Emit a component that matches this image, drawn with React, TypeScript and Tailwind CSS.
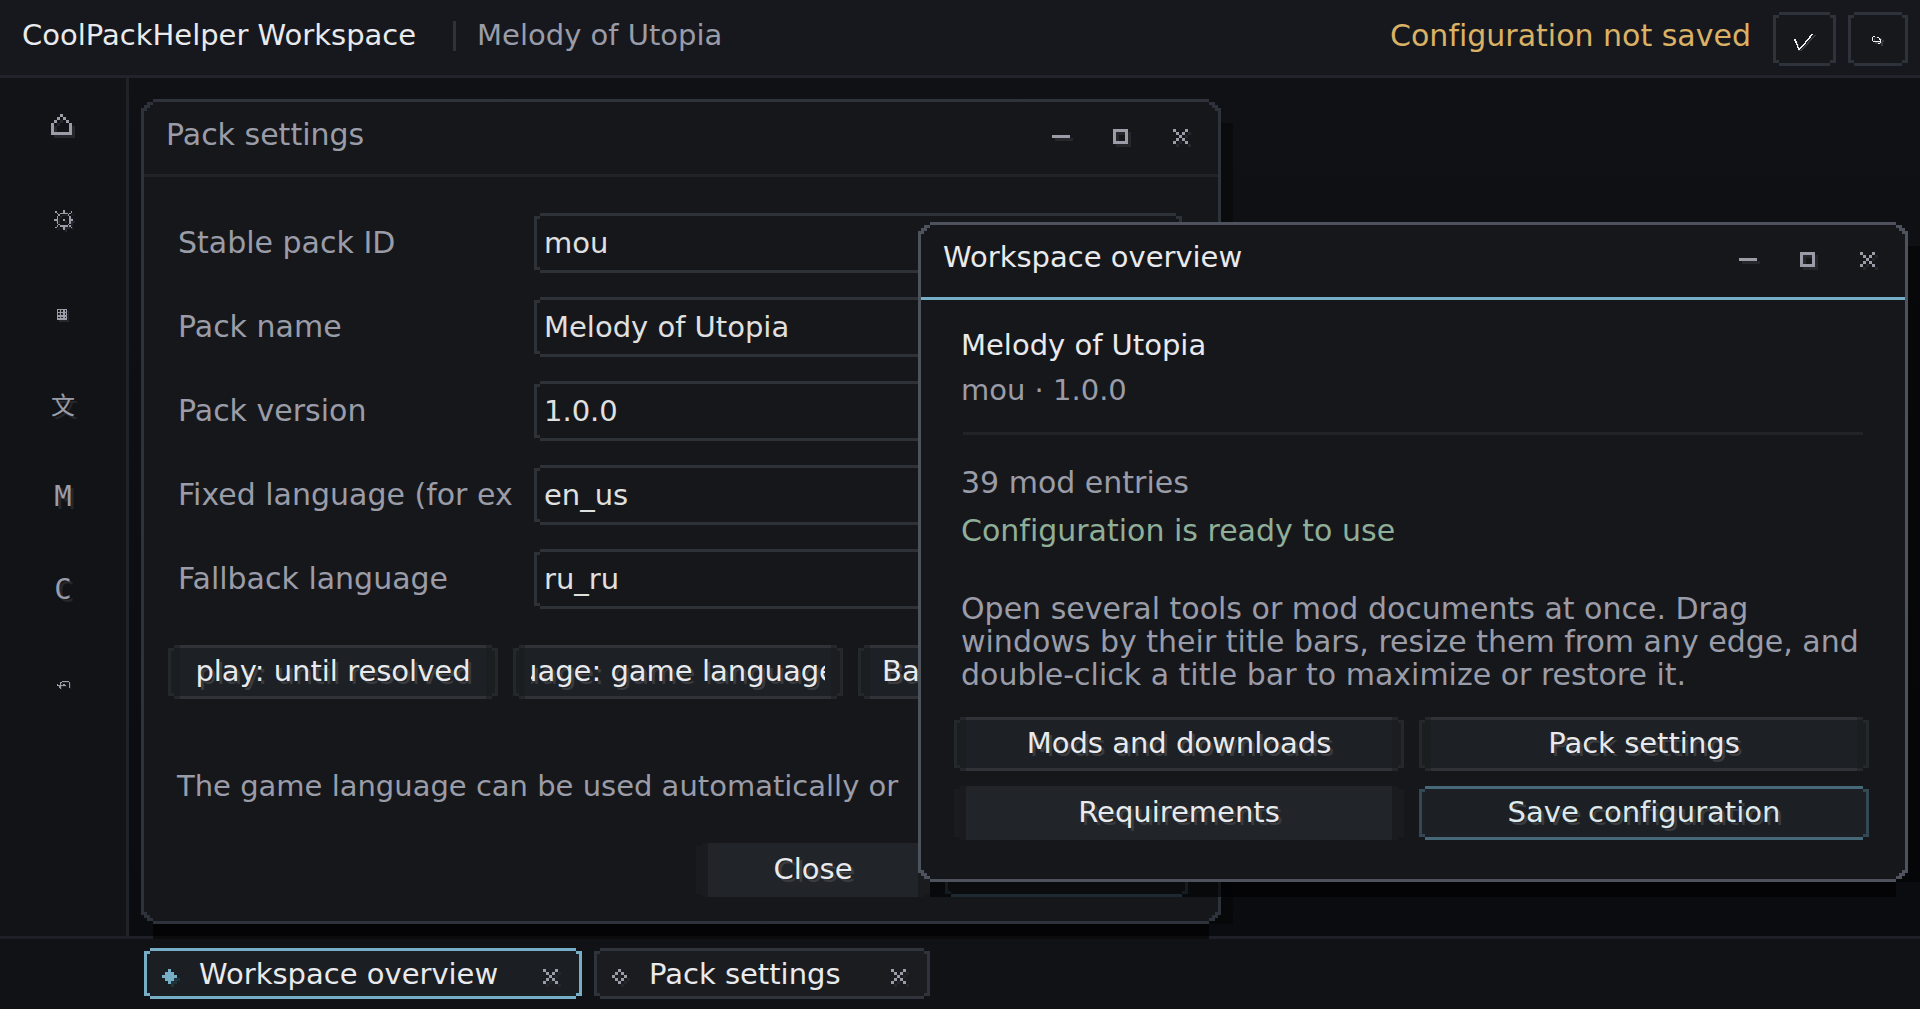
import React from 'react';
import clsx from 'clsx';

const NOTCH_OUTER =
  '[clip-path:polygon(0_3px,6px_3px,6px_0,calc(100%-6px)_0,calc(100%-6px)_3px,100%_3px,100%_calc(100%-3px),calc(100%-6px)_calc(100%-3px),calc(100%-6px)_100%,6px_100%,6px_calc(100%-3px),0_calc(100%-3px))]';
const NOTCH_INNER =
  'before:absolute before:inset-[3px] before:-z-10 before:[clip-path:polygon(0_3px,3px_3px,3px_0,calc(100%-3px)_0,calc(100%-3px)_3px,100%_3px,100%_calc(100%-3px),calc(100%-3px)_calc(100%-3px),calc(100%-3px)_100%,3px_100%,3px_calc(100%-3px),0_calc(100%-3px))]';
const NOTCH = `relative isolate ${NOTCH_OUTER} ${NOTCH_INNER}`;

const STEP_OUTER =
  '[clip-path:polygon(0_9px,3px_9px,3px_6px,6px_6px,6px_3px,12px_3px,12px_0,calc(100%-12px)_0,calc(100%-12px)_3px,calc(100%-6px)_3px,calc(100%-6px)_6px,calc(100%-3px)_6px,calc(100%-3px)_9px,100%_9px,100%_calc(100%-9px),calc(100%-3px)_calc(100%-9px),calc(100%-3px)_calc(100%-6px),calc(100%-6px)_calc(100%-6px),calc(100%-6px)_calc(100%-3px),calc(100%-12px)_calc(100%-3px),calc(100%-12px)_100%,12px_100%,12px_calc(100%-3px),6px_calc(100%-3px),6px_calc(100%-6px),3px_calc(100%-6px),3px_calc(100%-9px),0_calc(100%-9px))]';
const STEP_INNER =
  'before:absolute before:inset-[3px] before:-z-10 before:bg-[#16171b] before:[clip-path:polygon(0_9px,3px_9px,3px_6px,6px_6px,6px_3px,9px_3px,9px_0,calc(100%-9px)_0,calc(100%-9px)_3px,calc(100%-6px)_3px,calc(100%-6px)_6px,calc(100%-3px)_6px,calc(100%-3px)_9px,100%_9px,100%_calc(100%-9px),calc(100%-3px)_calc(100%-9px),calc(100%-3px)_calc(100%-6px),calc(100%-6px)_calc(100%-6px),calc(100%-6px)_calc(100%-3px),calc(100%-9px)_calc(100%-3px),calc(100%-9px)_100%,9px_100%,9px_calc(100%-3px),6px_calc(100%-3px),6px_calc(100%-6px),3px_calc(100%-6px),3px_calc(100%-9px),0_calc(100%-9px))]';

type PixelIconProps = { rows: string[]; className?: string; shadow?: string };

// 3px bitmap glyph with a drop shadow one cell down and right
const PixelIcon: React.FC<PixelIconProps> = ({ rows, className, shadow = '#26272b' }) => {
  const cells = rows.flatMap((row, y) =>
    [...row].map((c, x) => (c === '#' ? `M${x * 3} ${y * 3}h3v3h-3z` : ''))
  ).join('');
  const w = rows[0].length * 3 + 3;
  const h = rows.length * 3 + 3;
  return (
    <svg width={w} height={h} viewBox={`0 0 ${w} ${h}`} className={className} shapeRendering="crispEdges" aria-hidden="true">
      <path d={cells} fill={shadow} transform="translate(3 3)" />
      <path d={cells} fill="currentColor" />
    </svg>
  );
};

const MINUS = ['......', '......', '######', '......', '......'];
const SQUARE = ['#####', '#...#', '#...#', '#...#', '#####'];
const CROSS = ['#...#', '.#.#.', '..#..', '.#.#.', '#...#'];
const DIAMOND = ['..#..', '.###.', '#####', '.###.', '..#..'];
const DIAMOND_OPEN = ['..#..', '.#.#.', '#...#', '.#.#.', '..#..'];

const HOME = 'M9 5h3v3h-3zM6 8h3v3h-3zM12 8h3v3h-3zM3 11h3v3h-3zM15 11h3v3h-3zM0 14h3v9h-3zM18 14h3v9h-3zM0 23h21v3h-21z';
const GEAR =
  'M12 8h2v3h-2zM12 25h2v3h-2zM3 17h3v2h-3zM20 17h2v2h-2zM9 11h8v1h-8zM9 23h8v2h-8zM6 14h1v8h-1zM18 14h2v8h-2zM7 12h2v2h-2zM17 12h1v2h-1zM7 22h2v1h-2zM17 22h1v1h-1zM4 9h2v2h-2zM6 11h1v1h-1zM20 9h1v2h-1zM18 11h2v1h-2zM4 25h2v1h-2zM6 23h1v2h-1zM20 25h1v1h-1zM18 23h2v2h-2zM12 17h2v2h-2z';
const GRID =
  'M6 14h10v1h-10zM6 17h10v1h-10zM6 20h10v2h-10zM6 23h10v2h-10zM6 14h1v11h-1zM9 14h1v11h-1zM12 14h2v11h-2zM15 14h1v11h-1z';
const UNDO = 'M11 14h7v1h-7zM18 15h1v6h-1zM7 18h7v1h-7zM6 17h1v2h-1zM9 15h1v7h-1zM8 19h2v2h-2zM12 17h2v2h-2zM14 18h1v1h-1zM10 15h1v1h-1z';

const RailIcon: React.FC<{ d: string; offset: number }> = ({ d, offset }) => (
  <svg width="24" height="31" viewBox="0 0 24 31" shapeRendering="crispEdges" aria-hidden="true">
    <path d={d} fill="#26272b" transform={`translate(${offset} ${offset})`} />
    <path d={d} fill="currentColor" />
  </svg>
);

const railItems = [
  { label: 'Home', icon: <RailIcon d={HOME} offset={3} /> },
  { label: 'Settings', icon: <RailIcon d={GEAR} offset={2} /> },
  { label: 'Mods', icon: <RailIcon d={GRID} offset={2} /> },
  { label: 'Languages', icon: <span className="font-['Noto_Sans_CJK_SC',sans-serif] text-2xl">文</span> },
  { label: 'Modrinth', icon: <span>M</span> },
  { label: 'CurseForge', icon: <span>C</span> },
  { label: 'Undo', icon: <RailIcon d={UNDO} offset={1} /> },
];

const fields = [
  { id: 'pack-id', label: 'Stable pack ID', value: 'mou' },
  { id: 'pack-name', label: 'Pack name', value: 'Melody of Utopia' },
  { id: 'pack-version', label: 'Pack version', value: '1.0.0' },
  { id: 'fixed-language', label: 'Fixed language (for ex', value: 'en_us' },
  { id: 'fallback-language', label: 'Fallback language', value: 'ru_ru' },
];

const buttonTones = {
  normal:
    'bg-[linear-gradient(90deg,#24272b_12px,#303238_12px,#303238_calc(100%-12px),#24272b_calc(100%-12px))] before:bg-[linear-gradient(90deg,#1b1e21_9px,#1d2024_9px,#1d2024_calc(100%-9px),#1b1e21_calc(100%-9px))] text-[#e9eaed]',
  solid:
    'bg-[linear-gradient(90deg,#1a1b1f_12px,#212428_12px,#212428_calc(100%-12px),#1a1b1f_calc(100%-12px))] before:bg-[linear-gradient(90deg,#1a1b1f_9px,#212428_9px,#212428_calc(100%-9px),#1a1b1f_calc(100%-9px))] text-[#e9eaed]',
  accent:
    'bg-[linear-gradient(90deg,#324854_6px,#466878_6px,#466878_calc(100%-6px),#324854_calc(100%-6px))] before:bg-[#1c1f23] text-[#dde9ec]',
};

type PackButtonProps = {
  tone?: keyof typeof buttonTones;
  className?: string;
  label?: string;
  children?: React.ReactNode;
};

const PackButton: React.FC<PackButtonProps> = ({ tone = 'normal', className, label, children }) => (
  <button
    type="button"
    aria-label={label}
    className={clsx(NOTCH, buttonTones[tone], 'h-[54px] px-[18px] text-[29px] [text-shadow:3px_3px_0_#393b3e]', className)}
  >
    <span className="flex justify-center overflow-hidden whitespace-nowrap">{children}</span>
  </button>
);

type WindowProps = {
  title: string;
  active?: boolean;
  className: string;
  children: React.ReactNode;
};

const Window: React.FC<WindowProps> = ({ title, active = false, className, children }) => (
  <section aria-label={title} className={clsx('absolute', className)}>
    <div className="absolute inset-x-3 -bottom-[15px] h-8 bg-black/60" />
    <div className={clsx('absolute -right-3 top-6 bottom-0 w-6', active ? 'bg-black/50' : 'bg-black/30')} />
    <div className={clsx('relative isolate p-[3px]', STEP_OUTER, STEP_INNER, active ? 'bg-[#4d525d]' : 'bg-[#2e323a]')}>
      <header
        className={clsx(
          'flex h-[75px] justify-between border-b-[3px] pl-[22px] pr-[6px]',
          active ? 'border-[#76aec8]' : 'border-[#222327]'
        )}
      >
        <h2 className={clsx('leading-[65px]', active ? 'text-[29px] text-[#e9eaed]' : 'text-[30px] text-[#9a9ca8]')}>{title}</h2>
        <div className="flex text-[#9a9ca8]">
          <button type="button" aria-label="Minimize" className="flex w-[60px] items-center justify-center">
            <PixelIcon rows={MINUS} />
          </button>
          <button type="button" aria-label="Maximize" className="flex w-[60px] items-center justify-center">
            <PixelIcon rows={SQUARE} />
          </button>
          <button type="button" aria-label="Close" className="flex w-[60px] items-center justify-center">
            <PixelIcon rows={CROSS} />
          </button>
        </div>
      </header>
      {children}
    </div>
  </section>
);

const PackSettings: React.FC = () => (
  <Window title="Pack settings" className="left-3 top-[21px] w-[1080px]">
    <form className="pl-6 pr-[30px] pt-9 pb-6">
      <div className="flex flex-col gap-6 pl-[10px] pr-[6px]">
        {fields.map((field) => (
          <div key={field.id} className="flex h-[60px]">
            <label
              htmlFor={field.id}
              className="w-[356px] shrink-0 overflow-hidden whitespace-nowrap text-[30px] leading-[59px] text-[#9a9ca8]"
            >
              {field.label}
            </label>
            <div className={clsx(NOTCH, 'flex-1 bg-[#2d3138] before:bg-[#16171b]')}>
              <input
                id={field.id}
                type="text"
                defaultValue={field.value}
                className="h-full w-full bg-transparent pl-[10px] pb-px text-[29px] text-[#e0e0e0] outline-none"
              />
            </div>
          </div>
        ))}
      </div>

      <div className="mt-9 grid grid-cols-3 gap-[15px]">
        <PackButton>play: until resolved</PackButton>
        <PackButton>uage: game language</PackButton>
        <PackButton>
          <span className="w-full pl-[6px] text-left">Ba</span>
        </PackButton>
      </div>

      <p className="mt-[69px] whitespace-nowrap pl-[9px] text-[29px] leading-9 text-[#9a9ca8]">
        The game language can be used automatically or
      </p>

      <div className="mt-[39px] flex justify-end gap-[15px]">
        <PackButton tone="solid" className="w-[234px]">Close</PackButton>
        <PackButton tone="accent" className="w-[243px]" label="Save" />
      </div>
    </form>
  </Window>
);

const WorkspaceOverview: React.FC = () => (
  <Window title="Workspace overview" active className="right-3 top-[144px] w-[990px]">
    <div className="pl-[33px] pr-9 pt-[27px] pb-[39px]">
      <div className="pl-[7px] pr-[6px] text-[30px] leading-9 text-[#9a9ca8]">
        <h3 className="text-[29px] leading-9 text-[#e9eaed]">Melody of Utopia</h3>
        <p className="mt-[9px] text-[29px]">mou · 1.0.0</p>
        <hr className="mt-6 ml-[2px] border-t-[3px] border-[#222327]" />
        <p className="mt-[30px]">39 mod entries</p>
        <p className="mt-3 text-[#8faf98]">Configuration is ready to use</p>
        <p className="mt-[43px] leading-[33px]">
          Open several tools or mod documents at once. Drag windows by their title bars, resize them from any edge,
          and double-click a title bar to maximize or restore it.
        </p>
      </div>
      <div className="mt-[26px] grid grid-cols-2 gap-[15px]">
        <PackButton>Mods and downloads</PackButton>
        <PackButton>Pack settings</PackButton>
        <PackButton tone="solid">Requirements</PackButton>
        <PackButton tone="accent">Save configuration</PackButton>
      </div>
    </div>
  </Window>
);

type TaskTabProps = { title: string; active?: boolean; className: string };

const TaskTab: React.FC<TaskTabProps> = ({ title, active = false, className }) => (
  <div
    className={clsx(
      NOTCH,
      'flex h-[51px] items-center pl-[18px] pr-[21px]',
      active ? 'bg-[#76aec8] before:bg-[#1b1e22]' : 'bg-[#2f333b] before:bg-[#1b1c20]',
      className
    )}
  >
    <PixelIcon
      rows={active ? DIAMOND : DIAMOND_OPEN}
      shadow={active ? '#20343c' : '#26272b'}
      className={clsx('mt-[9px]', active ? 'text-[#76aec8]' : 'text-[#9a9ca8]')}
    />
    <button type="button" className="mt-[2px] ml-[19px] text-[29px] text-[#e9eaed]">{title}</button>
    <button type="button" aria-label={`Close ${title}`} className="ml-auto mt-[9px] text-[#9a9ca8]">
      <PixelIcon rows={CROSS} />
    </button>
  </div>
);

const App: React.FC = () => (
  <div className="flex min-h-screen flex-col overflow-hidden bg-[#111215] font-['DejaVu_Sans',sans-serif] [font-variant-ligatures:none]">
    <header className="flex h-[78px] items-start border-b-[3px] border-[#22232b] bg-[#17181d] pt-3 pl-[22px] pr-3">
      <h1 className="text-[29px] leading-[47px] text-[#e9eaed]">CoolPackHelper Workspace</h1>
      <div className="mt-[9px] ml-[37px] h-[30px] w-[3px] bg-[#2e323a]" />
      <p className="ml-[21px] text-[29px] leading-[47px] text-[#9a9ca8]">Melody of Utopia</p>
      <p className="ml-auto text-[30px] leading-[47px] text-[#dab265]">Configuration not saved</p>
      <button
        type="button"
        aria-label="Save"
        className={clsx(NOTCH, 'ml-[22px] flex h-[54px] w-[63px] items-center justify-center bg-[#2e323a] before:bg-[#17181c]')}
      >
        <svg width="23" height="24" viewBox="0 0 23 24" fill="none" strokeWidth="1.5" shapeRendering="crispEdges" aria-hidden="true">
          <path d="M3 14l2 4 1 5 2 1 14-16" stroke="#3a3b3f" />
          <path d="M1.5 12l2 4 2 6h1l4-4 9-11" stroke="#f0f1f3" />
        </svg>
      </button>
      <button
        type="button"
        aria-label="Redo"
        className={clsx(NOTCH, 'ml-3 flex h-[54px] w-[60px] items-center justify-center bg-[#2e323a] before:bg-[#17181c]')}
      >
        <svg width="24" height="24" viewBox="0 0 24 24" shapeRendering="crispEdges" aria-hidden="true">
          <path d="M9 10h2v1h-2zM8 11h1v4h-1zM9 15h8v2h-8zM14 11h2v2h-2zM16 13h2v2h-2zM15 17h2v2h-2z" fill="#3a3b3f" />
          <path d="M7 9h2v1h-2zM6 10h1v4h-1zM7 14h8v1h-8zM11 10h2v1h-2zM13 11h1v2h-1zM14 12h1v4h-1zM12 16h2v1h-2z" fill="#f0f1f3" />
        </svg>
      </button>
    </header>

    <div className="relative z-10 flex flex-1">
      <nav className="w-[129px] border-r-[3px] border-[#202229] bg-[#121317]">
        {railItems.map((item) => (
          <button
            key={item.label}
            type="button"
            aria-label={item.label}
            className="flex h-[93px] w-full items-center justify-center font-['DejaVu_Sans_Mono',monospace] text-[29px] text-[#9a9ca8] [text-shadow:3px_3px_0_#26272b]"
          >
            {item.icon}
          </button>
        ))}
      </nav>
      <main className="relative flex-1 bg-linear-to-b from-[#101115] to-[#0b0c0f]">
        <PackSettings />
        <WorkspaceOverview />
      </main>
    </div>

    <footer className="flex h-[73px] gap-3 border-t-[3px] border-[#1f2027] bg-[#111215] pt-[9px] pl-36">
      <TaskTab title="Workspace overview" active className="w-[438px]" />
      <TaskTab title="Pack settings" className="w-[336px]" />
    </footer>
  </div>
);

export default App;
